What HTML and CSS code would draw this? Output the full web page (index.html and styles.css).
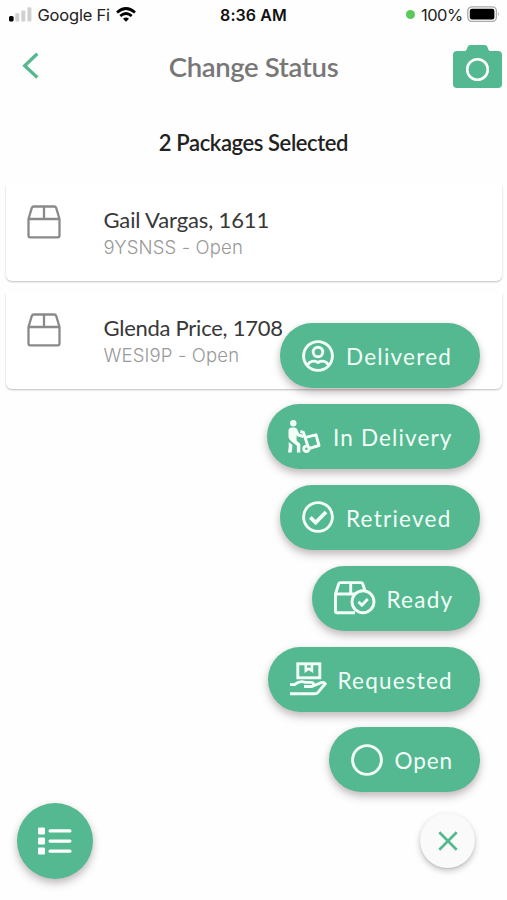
FILE: index.html
```html
<!DOCTYPE html>
<html lang="en">
<head>
<meta charset="utf-8">
<title>Change Status</title>
<link rel="stylesheet" href="styles.css">
</head>
<body>
<div class="screen">
  <div class="statusbar">
    <div class="carrier">
      <svg width="23" height="15" viewBox="0 0 23 15"><rect x="0" y="9" width="4.6" height="5.5" rx="1.5" fill="#000"/><rect x="6.3" y="6.3" width="4" height="8.2" rx="1" fill="#d0d0d0"/><rect x="12.3" y="3.4" width="4" height="11.1" rx="1" fill="#d0d0d0"/><rect x="18.4" y="0.3" width="4" height="14.2" rx="1" fill="#d0d0d0"/></svg>
      <span class="carrier-name">Google Fi</span>
      <svg class="wifi" width="20" height="15" viewBox="0 0 20 15"><g fill="none" stroke="#000" stroke-width="2.7"><path d="M1 5.4Q10-2.4 19 5.4"/><path d="M4.3 9Q10 4 15.7 9"/></g><path d="M7 11.7Q10 9.3 13 11.7L10 14.7Z"/></svg>
    </div>
    <span class="clock">8:36 AM</span>
    <div class="power">
      <span class="dot"></span>
      <span class="percent">100%</span>
      <svg width="33" height="17" viewBox="0 0 33 17"><rect x=".8" y=".8" width="28.6" height="14.6" rx="4.2" fill="#fff" stroke="#aaa" stroke-width="1.3"/><rect x="2.8" y="2.8" width="24.6" height="10.6" rx="2.2"/><path d="M31 5.8Q32.5 8 31 10.3Z" fill="#999"/></svg>
    </div>
  </div>

  <div class="header">
    <svg class="back" width="18" height="28" viewBox="0 0 18 28"><path d="M15.3 1.7L2.7 13.7L15.3 25.5" fill="none" stroke="#54b890" stroke-width="3.3"/></svg>
    <h1>Change Status</h1>
    <svg class="camera" width="49" height="43" viewBox="0 0 49 43"><path d="M4 6H11.5Q13 6 13.7 4.5L14.7 1.8Q15.3 0 17.2 0H31.8Q33.7 0 34.3 1.8L35.3 4.5Q36 6 37.5 6H45Q49 6 49 10V39Q49 43 45 43H4Q0 43 0 39V10Q0 6 4 6Z" fill="#54b890"/><circle cx="24.5" cy="24.5" r="10.3" fill="none" stroke="#fff" stroke-width="2.6"/></svg>
  </div>

  <h2>2 Packages Selected</h2>

  <div class="list">
    <div class="card">
      <svg class="box" width="34" height="34" viewBox="0 0 34 34"><g fill="none" stroke="#8a8a8a" stroke-width="2.3" stroke-linejoin="round"><path d="M1.5 14V30.5Q1.5 32.3 3.3 32.3H30.7Q32.5 32.3 32.5 30.5V14L29.2 2.8Q28.7 1.5 27.2 1.5H6.8Q5.3 1.5 4.8 2.8ZM1.5 14H32.5M17 1.5V14"/></g></svg>
      <div class="info"><div class="name">Gail Vargas, 1611</div><div class="meta">9YSNSS - Open</div></div>
    </div>
    <div class="card">
      <svg class="box" width="34" height="34" viewBox="0 0 34 34"><g fill="none" stroke="#8a8a8a" stroke-width="2.3" stroke-linejoin="round"><path d="M1.5 14V30.5Q1.5 32.3 3.3 32.3H30.7Q32.5 32.3 32.5 30.5V14L29.2 2.8Q28.7 1.5 27.2 1.5H6.8Q5.3 1.5 4.8 2.8ZM1.5 14H32.5M17 1.5V14"/></g></svg>
      <div class="info"><div class="name second">Glenda Price, 1708</div><div class="meta">WESI9P - Open</div></div>
    </div>
  </div>

  <div class="actions">
    <div class="pill delivered">
      <svg width="32" height="32" viewBox="0 0 32 32"><g fill="none" stroke="#f3fff9" stroke-width="2.9"><circle cx="16" cy="16" r="14.4"/><circle cx="16" cy="12" r="4.8"/><path d="M5.6 24.8C8 21 12 20.3 16 22.5C20 20.3 24 21 26.4 24.8"/></g></svg>
      <span>Delivered</span>
    </div>
    <div class="pill in-delivery">
      <svg width="33" height="33" viewBox="0 0 33 33"><circle cx="5.3" cy="3.2" r="3.2" fill="#f3fff9"/><path d="M0.5 11Q0.5 7.5 4 7.5H6.5Q8.8 7.5 9.5 10L11 13.6L15.5 15V18L9.6 16.5L8.6 15V20.5L12.3 24V32.5H8.9V25.7L3.5 21.5Q.5 19.5 .5 17ZM.7 22L4.3 24.8V28L3.6 32.5H0L.7 27.5Z" fill="#f3fff9"/><g fill="none" stroke="#f3fff9" stroke-width="2.9"><path d="M12.3 11.5L15.4 12.4L20 26.5M16.5 17.6L28 14.8L31 25.5L21.5 28.4" stroke-linejoin="round"/><circle cx="18.4" cy="28.8" r="2.7"/></g></svg>
      <span>In Delivery</span>
    </div>
    <div class="pill retrieved">
      <svg width="32" height="32" viewBox="0 0 32 32"><g fill="none" stroke="#f3fff9" stroke-width="2.9"><circle cx="16" cy="16" r="14.4"/><path d="M8.3 16.3L13.7 21.6L24 11" stroke-width="3.8"/></g></svg>
      <span>Retrieved</span>
    </div>
    <div class="pill ready">
      <svg width="42" height="34" viewBox="0 0 42 34"><g fill="none" stroke="#f3fff9" stroke-width="2.9" stroke-linejoin="round"><path d="M21 31.8H3Q1.5 31.8 1.5 30.3V13L4.7 2.7Q5 1.6 6.5 1.6H27Q28.3 1.6 28.7 2.7L31 10M1.5 13H21M16.7 1.6V13"/><circle cx="29" cy="20.8" r="11"/><path d="M24.5 20.8L27.9 24.2L33.8 18"/></g></svg>
      <span>Ready</span>
    </div>
    <div class="pill requested">
      <svg width="37" height="34" viewBox="0 0 37 34"><g fill="none" stroke="#f3fff9" stroke-width="2.9"><rect x="7.8" y="1.8" width="22" height="14"/><path d="M0 22.6H4.5C8 19.7 12 19 15.2 20.4H21Q23.5 20.4 23.5 22.4Q23.5 24.5 21 24.5H14M23.2 24L31 20.7Q34 19.7 35.2 21.8L28 30.3Q26.8 31.8 24.5 31.8H0"/></g><path d="M14.5 2H23.2V11L18.8 8.2L14.5 11Z" fill="#f3fff9"/><path d="M17.1 3.2H20.6V6.2L18.8 5.2L17.1 6.2Z" fill="#54b890"/></svg>
      <span>Requested</span>
    </div>
    <div class="pill open">
      <svg width="32" height="32" viewBox="0 0 32 32"><circle cx="16" cy="16" r="14.4" fill="none" stroke="#f3fff9" stroke-width="2.9"/></svg>
      <span>Open</span>
    </div>
  </div>

  <div class="bottom">
    <div class="fab menu">
      <svg width="34" height="28" viewBox="0 0 34 28"><g fill="#fff"><rect x="0" y=".5" width="7" height="7" rx="1.2"/><rect x="0" y="10.5" width="7" height="7" rx="1.2"/><rect x="0" y="20.5" width="7" height="7" rx="1.2"/><rect x="10.5" y="2.3" width="23" height="3.3" rx="1.6"/><rect x="10.5" y="12.4" width="23" height="3.3" rx="1.6"/><rect x="10.5" y="22.5" width="23" height="3.3" rx="1.6"/></g></svg>
    </div>
    <div class="fab close">
      <svg width="20" height="20" viewBox="0 0 20 20"><path d="M1.3 1.3L18.7 18.7M18.7 1.3L1.3 18.7" stroke="#54b890" stroke-width="2.7"/></svg>
    </div>
  </div>
</div>
</body>
</html>
```
FILE: styles.css
```css
* { box-sizing: border-box; }
body { margin: 0; background: #fefefe; font-family: Lato, sans-serif; }
svg { display: block; flex: none; }
.screen { position: relative; width: 507px; height: 900px; overflow: hidden; display: flex; flex-direction: column; }

.statusbar { height: 30px; display: grid; grid-template-columns: 1fr auto 1fr; font-family: Inter, sans-serif; color: #222; }
.carrier { display: flex; align-items: flex-start; padding: 7px 0 0 9px; }
.carrier-name { font-size: 16.5px; line-height: 17px; margin-left: 5.5px; width: 73.5px; white-space: nowrap; letter-spacing: -0.2px; }
.wifi { margin-left: 5px; }
.clock { font-size: 16px; font-weight: 600; line-height: 30px; color: #111; letter-spacing: 0.1px; }
.power { display: flex; align-items: flex-start; justify-content: flex-end; padding: 6px 7px 0 0; }
.dot { width: 9px; height: 9px; border-radius: 50%; background: #5cc85c; margin: 4px 6px 0 0; }
.percent { font-size: 16.5px; line-height: 19px; width: 46px; white-space: nowrap; letter-spacing: -0.5px; }

.header { height: 78px; display: grid; grid-template-columns: 100px 1fr 100px; }
.back { margin: 22px 0 0 22px; }
h1 { margin: 0; text-align: center; font-size: 27.5px; font-weight: 600; line-height: 74px; color: #777; letter-spacing: -0.35px; }
.camera { margin: 15px 0 0 46px; }

h2 { margin: 0; height: 77px; line-height: 69px; font-size: 22px; font-weight: 600; text-align: center; color: #222; letter-spacing: -0.4px; }

.list { display: flex; flex-direction: column; gap: 12px; padding: 0 5px 0 6px; }
.card { height: 96px; display: flex; padding: 20px 21px; background: #fff; border-radius: 0 0 6px 6px; box-shadow: 0 1px 2px rgba(0, 0, 0, .25); clip-path: inset(0 -3px -5px -3px); }
.info { margin-left: 42.5px; }
.name { font-size: 22px; line-height: 29px; color: #383838; letter-spacing: -0.13px; }
.name.second { letter-spacing: -0.26px; }
.meta { font-family: Inter, sans-serif; font-weight: 300; font-size: 18.5px; line-height: 26px; color: #999; letter-spacing: 0.15px; }

.actions { position: absolute; right: 27px; top: 323px; display: flex; flex-direction: column; align-items: flex-end; gap: 15.9px; }
.pill { height: 65px; display: flex; align-items: center; gap: 12.5px; padding-left: 21.5px; border-radius: 33px; background: #54b890; color: #f3fff9; font-size: 22.5px; letter-spacing: 1.25px; white-space: nowrap; box-shadow: 0 5px 8px rgba(70, 50, 60, .25), 0 2px 6px rgba(70, 50, 60, .12); }
.pill span { padding-top: 2px; }
.delivered, .retrieved { width: 200px; }
.in-delivery { width: 213px; padding-left: 20.5px; letter-spacing: 1.15px; }
.ready { width: 168px; gap: 11px; }
.requested { width: 212px; gap: 11px; letter-spacing: 1.2px; }
.open { width: 151px; gap: 12px; letter-spacing: 0.9px; }

.bottom { margin-top: auto; height: 97px; display: flex; justify-content: space-between; align-items: flex-start; padding: 0 32px 0 17px; }
.fab { display: flex; align-items: center; justify-content: center; border-radius: 50%; }
.menu { width: 76px; height: 76px; background: #54b890; box-shadow: 0 5px 8px rgba(70, 50, 60, .25), 0 2px 6px rgba(70, 50, 60, .12); }
.close { width: 55px; height: 55px; margin-top: 10px; background: #fafafa; box-shadow: 0 3px 6px rgba(0, 0, 0, .22), 0 1px 2px rgba(0, 0, 0, .1); }
```
